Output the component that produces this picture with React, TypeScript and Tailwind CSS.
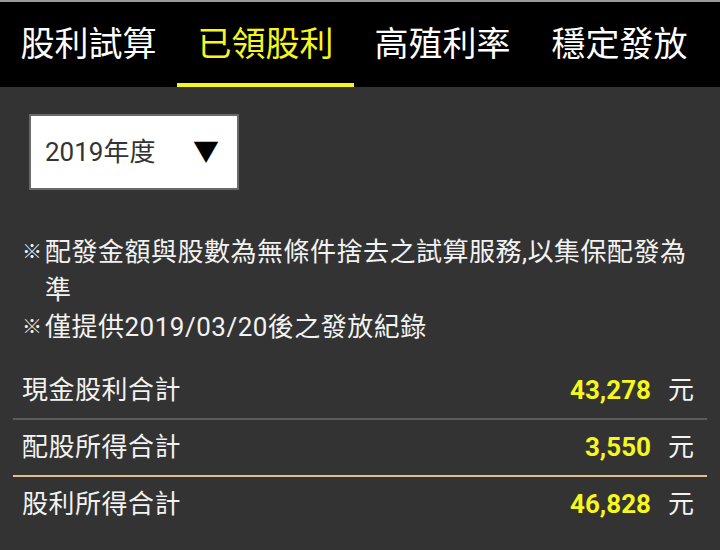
import { useState } from "react";

const tabs = ["股利試算", "已領股利", "高殖利率", "穩定發放"];

const totals = [
  { label: "現金股利合計", value: "43,278", line: "border-[#5c5c5c]" },
  { label: "配股所得合計", value: "3,550", line: "border-[#e3bf90]" },
  { label: "股利所得合計", value: "46,828", line: "border-transparent" },
];

export default function App() {
  const [active, setActive] = useState(1);

  return (
    <div
      className="w-[720px] h-[550px] overflow-hidden bg-[#333333] text-white"
      style={{ fontFamily: 'Roboto, "Noto Sans CJK TC", sans-serif' }}
    >
      {/* tab bar */}
      <div className="h-[87px] bg-black border-t-2 border-[#9a9a9a] flex">
        {tabs.map((t, i) => (
          <button
            key={t}
            onClick={() => setActive(i)}
            className={`w-[177px] shrink-0 flex items-center justify-center text-[34px] border-b-4 pt-[4px] ${
              active === i ? "text-[#f7f71e] border-[#f7f71e]" : "text-white border-transparent"
            }`}
          >
            {t}
          </button>
        ))}
      </div>

      <div className="pt-[27px] pl-[29px]">
        <div className="w-[210px] h-[76px] bg-white border-2 border-[#6a6a6a] flex items-center justify-between pl-[14px] pr-[18px]">
          <span className="text-[26px] text-[#333333]">2019年度</span>
          <span className="text-[26px] text-black leading-none">▼</span>
        </div>
      </div>

      <div className="mt-[44px] pl-[22px] pr-[20px] text-[26px] tracking-[0.5px] leading-[37.5px] text-[#f2f2f2]">
        <div className="flex">
          <span className="w-[23px] shrink-0 text-[20px]">※</span>
          <span>配發金額與股數為無條件捨去之試算服務,以集保配發為準</span>
        </div>
        <div className="flex">
          <span className="w-[23px] shrink-0 text-[20px]">※</span>
          <span>僅提供2019/03/20後之發放紀錄</span>
        </div>
      </div>

      <div className="mt-[16px] ml-[13px] mr-[13px]">
        {totals.map((r) => (
          <div
            key={r.label}
            className={`h-[57px] flex items-center justify-between pl-[9px] pr-[13px] border-b-2 ${r.line}`}
          >
            <span className="text-[26px] tracking-[0.5px] text-[#f2f2f2]">{r.label}</span>
            <span className="flex items-center gap-[17px]">
              <span className="text-[26px] font-bold text-[#f7f71e]">{r.value}</span>
              <span className="text-[26px] text-[#f2f2f2]">元</span>
            </span>
          </div>
        ))}
      </div>
    </div>
  );
}
